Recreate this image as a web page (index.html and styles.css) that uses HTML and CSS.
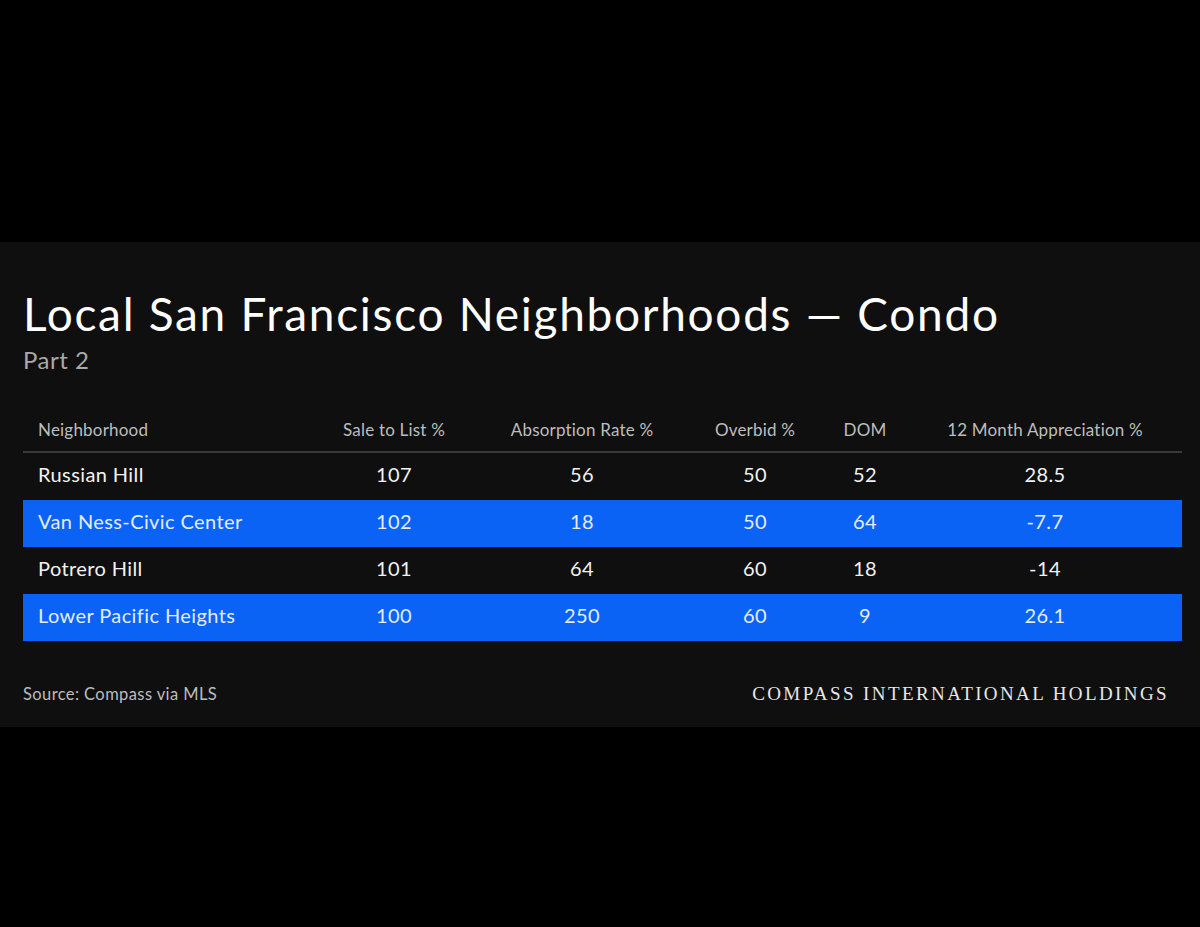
FILE: index.html
```html
<!DOCTYPE html>
<html>
<head>
<meta charset="utf-8">
<link rel="stylesheet" href="styles.css">
</head>
<body>
<div class="panel">
  <h1 class="title">Local San Francisco Neighborhoods — Condo</h1>
  <div class="subtitle">Part 2</div>
  <div class="table">
    <div class="row head">
      <div class="c name">Neighborhood</div>
      <div class="c">Sale to List %</div>
      <div class="c">Absorption Rate %</div>
      <div class="c">Overbid %</div>
      <div class="c">DOM</div>
      <div class="c">12 Month Appreciation %</div>
    </div>
    <div class="row">
      <div class="c name">Russian Hill</div>
      <div class="c">107</div>
      <div class="c">56</div>
      <div class="c">50</div>
      <div class="c">52</div>
      <div class="c">28.5</div>
    </div>
    <div class="row blue">
      <div class="c name">Van Ness-Civic Center</div>
      <div class="c">102</div>
      <div class="c">18</div>
      <div class="c">50</div>
      <div class="c">64</div>
      <div class="c">-7.7</div>
    </div>
    <div class="row">
      <div class="c name">Potrero Hill</div>
      <div class="c">101</div>
      <div class="c">64</div>
      <div class="c">60</div>
      <div class="c">18</div>
      <div class="c">-14</div>
    </div>
    <div class="row blue">
      <div class="c name">Lower Pacific Heights</div>
      <div class="c">100</div>
      <div class="c">250</div>
      <div class="c">60</div>
      <div class="c">9</div>
      <div class="c">26.1</div>
    </div>
  </div>
  <div class="footer">
    <div class="source">Source: Compass via MLS</div>
    <div class="brand">COMPASS INTERNATIONAL HOLDINGS</div>
  </div>
</div>
</body>
</html>
```

FILE: styles.css
```css
html, body {
  margin: 0;
  padding: 0;
  background: #000;
}
body {
  width: 1200px;
  height: 927px;
  font-family: "Lato", "Noto Sans", sans-serif;
  color: #fff;
}
.panel {
  margin-top: 242px;
  height: 485px;
  box-sizing: border-box;
  background: #0f0f10;
  padding: 44px 18px 0 23px;
  display: flex;
  flex-direction: column;
}
.title {
  margin: 0;
  font-weight: 400;
  font-size: 46px;
  line-height: 56px;
  letter-spacing: 1.7px;
  color: #fff;
  white-space: nowrap;
}
.subtitle {
  margin-top: 3px;
  font-size: 24px;
  line-height: 30px;
  letter-spacing: 0.5px;
  color: #a9a9a9;
}
.table {
  margin-top: 32px;
  display: flex;
  flex-direction: column;
}
.row {
  display: grid;
  grid-template-columns: 289px 164px 212px 134px 86px 274px;
  height: 47px;
  box-sizing: border-box;
  padding-bottom: 6px;
  align-items: center;
  font-size: 20px;
  letter-spacing: 0.4px;
  color: #f2f2f2;
}
.row.head {
  height: 46px;
  padding-bottom: 0;
  border-bottom: 2px solid #3a3a3a;
  font-size: 17px;
  letter-spacing: 0.2px;
  color: #bdbdbd;
}
.row.blue {
  background: #0a63f5;
  color: #e4ecff;
}
.c {
  text-align: center;
  white-space: nowrap;
}
.c.name {
  text-align: left;
  padding-left: 15px;
}
.footer {
  margin-top: 41px;
  display: flex;
  justify-content: space-between;
  align-items: center;
  height: 24px;
}
.source {
  font-size: 16.5px;
  letter-spacing: 0.4px;
  color: #bcbcbc;
}
.brand {
  font-family: "Liberation Serif", serif;
  font-size: 19px;
  letter-spacing: 2.4px;
  color: #e6e6e6;
  padding-right: 13px;
}
```
